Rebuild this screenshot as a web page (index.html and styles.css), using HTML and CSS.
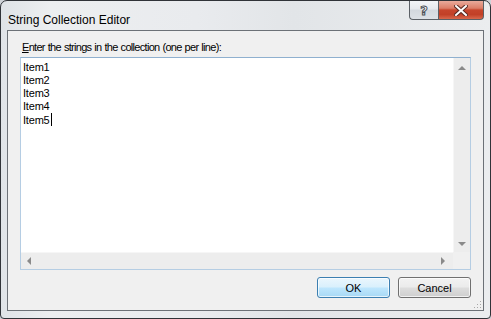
FILE: index.html
```html
<!DOCTYPE html>
<html>
<head>
<meta charset="utf-8">
<link rel="stylesheet" href="styles.css">
</head>
<body>
<div class="window">
  <div class="titlebar">
    <span class="title">String Collection Editor</span>
    <div class="caption-btns">
      <div class="cap help"><span class="q">?</span></div>
      <div class="cap close">
        <svg width="14" height="11" viewBox="0 0 14 11">
          <path d="M2 1 L12 10 M12 1 L2 10" stroke="#5a2a22" stroke-width="4" stroke-linecap="square"/>
          <path d="M2 1 L12 10 M12 1 L2 10" stroke="#ffffff" stroke-width="2" stroke-linecap="square"/>
        </svg>
      </div>
    </div>
  </div>
  <div class="client">
    <div class="label"><u>E</u>nter the strings in the collection (one per line):</div>
    <div class="textbox">
      <div class="edit-row">
        <div class="text">Item1<br>Item2<br>Item3<br>Item4<br>Item5<span class="caret"></span></div>
        <div class="vscroll">
          <span class="arr up"></span>
          <span class="arr down"></span>
        </div>
      </div>
      <div class="hrow">
        <div class="hscroll">
          <span class="arr left"></span>
          <span class="arr right"></span>
        </div>
        <div class="corner"></div>
      </div>
    </div>
    <div class="buttons">
      <button class="btn default">OK</button>
      <button class="btn">Cancel</button>
    </div>
    <svg class="grip" width="9" height="9" viewBox="0 0 9 9">
      <g fill="#a8a8a8">
        <rect x="7" y="1" width="1" height="1"/>
        <rect x="4" y="4" width="1" height="1"/><rect x="7" y="4" width="1" height="1"/>
        <rect x="1" y="7" width="1" height="1"/><rect x="4" y="7" width="1" height="1"/><rect x="7" y="7" width="1" height="1"/>
      </g>
    </svg>
  </div>
</div>
</body>
</html>
```

FILE: styles.css
```css
html, body {
  margin: 0;
  padding: 0;
  background: #cfd3d8;
}
.window {
  box-sizing: border-box;
  width: 491px;
  height: 319px;
  border: 1px solid #303338;
  border-radius: 7px 7px 4px 4px;
  background: linear-gradient(90deg, #dfe3e7 0%, #eceef0 10%, #e9ebee 40%, #e2e5e8 60%, #ebedef 100%);
  padding: 0 6px 7px 6px;
  display: flex;
  flex-direction: column;
}
.titlebar {
  height: 29px;
  display: flex;
  justify-content: space-between;
  align-items: flex-start;
}
.title {
  font-family: "Liberation Sans", Arial, sans-serif;
  font-size: 12px;
  color: #000;
  margin-top: 12px;
  margin-left: 1px;
  line-height: 14px;
}
.caption-btns {
  display: flex;
}
.cap {
  box-sizing: border-box;
  height: 19px;
  border: 1px solid #5b6066;
  border-top: none;
  display: flex;
  align-items: center;
  justify-content: center;
}
.help {
  width: 29px;
  border-radius: 0 0 0 4px;
  border-right: none;
  background: linear-gradient(180deg, #f3f5f7 0%, #e6e9ed 45%, #d3d8de 50%, #dde1e6 100%);
}
.q {
  font-family: "DejaVu Sans", sans-serif;
  font-weight: bold;
  font-size: 13px;
  color: #ffffff;
  -webkit-text-stroke: 1px #4a4f55;
  line-height: 13px;
}
.close {
  width: 46px;
  border-radius: 0 0 4px 0;
  background: linear-gradient(180deg, #e9aa9b 0%, #dc7e68 40%, #c7452c 50%, #c24027 75%, #d9684c 100%);
}
.client {
  position: relative;
  flex: 1;
  border: 1px solid #6c7177;
  background: #f0f0f0;
  padding: 10px 12px 0 12px;
  display: flex;
  flex-direction: column;
}
.label {
  font-family: "Liberation Sans", Arial, sans-serif;
  font-size: 11px;
  line-height: 13px;
  color: #000;
  margin-left: 2px;
  letter-spacing: -0.7px;
  word-spacing: 0.6px;
}
.textbox {
  box-sizing: border-box;
  margin-top: 3px;
  height: 213px;
  border: 1px solid #b5cde3;
  border-top-color: #8fb0cf;
  background: #ffffff;
  display: flex;
  flex-direction: column;
}
.edit-row {
  flex: 1;
  display: flex;
}
.text {
  flex: 1;
  padding: 3px 0 0 2px;
  font-family: "Liberation Sans", Arial, sans-serif;
  font-size: 11px;
  line-height: 13px;
  color: #000;
  letter-spacing: -0.2px;
}
.caret {
  display: inline-block;
  width: 1px;
  height: 13px;
  background: #000;
  vertical-align: -2px;
  margin-left: 1px;
}
.vscroll {
  width: 17px;
  background: #ededed;
  border-left: 1px solid #f6f6f6;
  box-sizing: border-box;
  display: flex;
  flex-direction: column;
  justify-content: space-between;
  align-items: center;
  padding: 8px 0 6px 0;
}
.hrow {
  height: 17px;
  display: flex;
}
.hscroll {
  flex: 1;
  background: #ededed;
  border-top: 1px solid #f6f6f6;
  box-sizing: border-box;
  display: flex;
  justify-content: space-between;
  align-items: center;
  padding: 0 8px 0 6px;
}
.corner {
  width: 17px;
  background: #f0f0f0;
}
.arr {
  width: 0;
  height: 0;
  display: block;
}
.up {
  border-left: 4px solid transparent;
  border-right: 4px solid transparent;
  border-bottom: 4px solid #8a8a8a;
}
.down {
  border-left: 4px solid transparent;
  border-right: 4px solid transparent;
  border-top: 4px solid #8a8a8a;
}
.left {
  border-top: 4px solid transparent;
  border-bottom: 4px solid transparent;
  border-right: 4px solid #8a8a8a;
}
.right {
  border-top: 4px solid transparent;
  border-bottom: 4px solid transparent;
  border-left: 4px solid #8a8a8a;
}
.buttons {
  margin-top: 7px;
  display: flex;
  justify-content: flex-end;
  gap: 8px;
}
.btn {
  box-sizing: border-box;
  width: 73px;
  height: 21px;
  margin: 0;
  padding: 0;
  border: 1px solid #707070;
  border-radius: 3px;
  font-family: "Liberation Sans", Arial, sans-serif;
  font-size: 11px;
  color: #000;
  background: linear-gradient(180deg, #f2f2f2 0%, #ebebeb 48%, #dddddd 52%, #cfcfcf 100%);
  box-shadow: inset 0 0 0 1px rgba(255,255,255,0.7);
}
.btn.default {
  border-color: #3c7fb1;
  background: linear-gradient(180deg, #eaf6fd 0%, #d9f0fc 48%, #bee6fd 52%, #a7d9f5 100%);
}
.grip {
  position: absolute;
  right: 1px;
  bottom: 1px;
}
```
